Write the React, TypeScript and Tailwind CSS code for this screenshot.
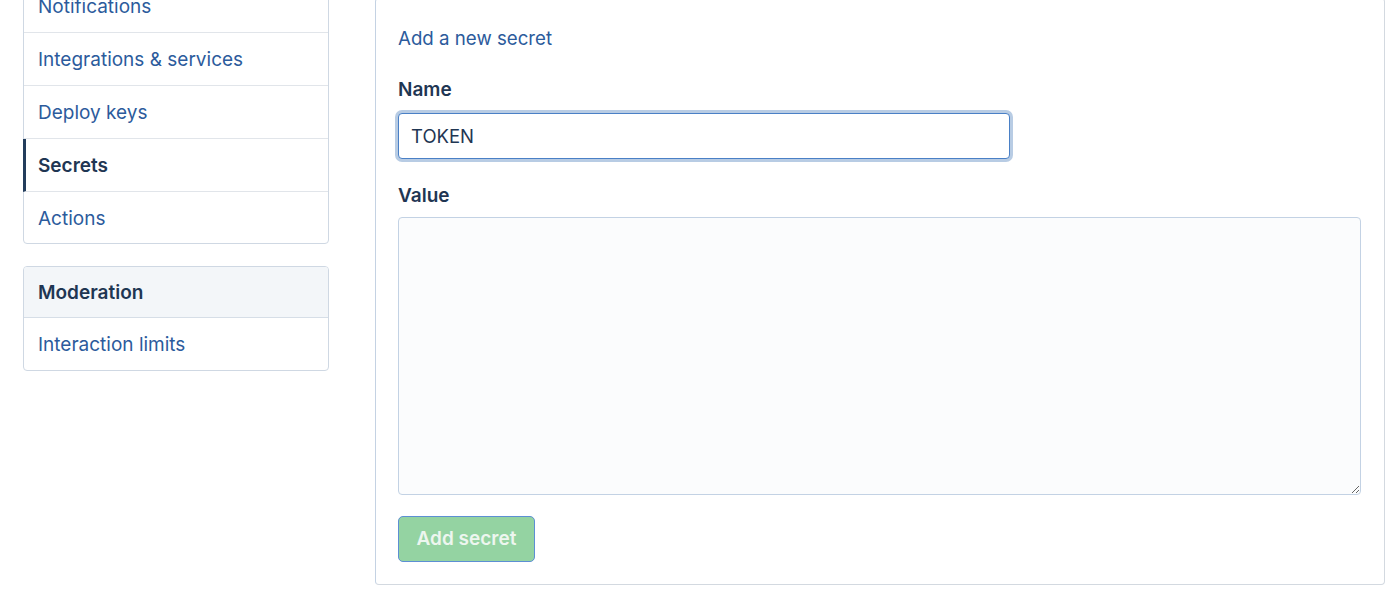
import React from 'react';

const menuItems = ['Notifications', 'Integrations & services', 'Deploy keys', 'Secrets', 'Actions'];

const App: React.FC = () => {
  return (
    <div
      className="min-h-[598px] h-[598px] overflow-hidden bg-white flex items-start pl-[23px]"
      style={{ fontFamily: 'Inter, "Noto Sans", sans-serif' }}
    >
      {/* sidebar */}
      <div className="w-[306px] -mt-[21px] flex flex-col gap-[22px] shrink-0">
        <nav className="border border-[#cfd8e3] rounded-[4px] bg-white">
          {menuItems.map((item, i) => {
            const selected = item === 'Secrets';
            const last = i === menuItems.length - 1;
            return (
              <a
                key={item}
                className={
                  'flex items-center pt-[3px] text-[19px] ' +
                  (last ? 'h-[51px] ' : 'h-[53px] border-b border-[#e1e5ea] ') +
                  (selected
                    ? 'border-l-[3px] border-l-[#233d5c] -ml-px pl-[12px] font-semibold text-[#1f3653]'
                    : 'pl-[14px] text-[#2c5b9c]')
                }
              >
                {item}
              </a>
            );
          })}
        </nav>
        <nav className="border border-[#cfd8e3] rounded-[4px] bg-white overflow-hidden">
          <div className="h-[51px] flex items-center pt-[2px] pl-[14px] bg-[#f3f6f9] border-b border-[#d6dee7] text-[19px] font-semibold text-[#1f3653]">
            Moderation
          </div>
          <a className="h-[52px] flex items-center pt-[2px] pl-[14px] text-[19px] text-[#2c5b9c]">Interaction limits</a>
        </nav>
      </div>

      {/* main */}
      <div className="ml-[46px] w-[1010px] -mt-[2px] border border-[#d3d9e0] border-l-[#c4d2e3] rounded-[4px] bg-white pt-[26px] pb-[22px] pl-[22px] pr-[23px] flex flex-col">
        <div className="text-[18.7px] leading-[28px] text-[#2c5b9c]">Add a new secret</div>
        <label className="mt-[24px] text-[19px] leading-[26px] font-semibold text-[#1f3653]">Name</label>
        <input
          readOnly
          value="TOKEN"
          className="mt-[10px] w-[612px] h-[46px] px-[12px] text-[18.5px] text-[#1f3653] bg-white border border-[#4a80c6] rounded-[4px] outline-none shadow-[0_0_0_3px_#b8cce4]"
        />
        <label className="mt-[24px] text-[19px] leading-[26px] font-semibold text-[#1f3653]">Value</label>
        <textarea
          readOnly
          className="mt-[8px] w-[963px] h-[278px] bg-[#fbfcfd] border border-[#c3d2e4] rounded-[4px] outline-none"
        />
        <div className="mt-[21px]">
          <button className="w-[137px] h-[46px] rounded-[5px] bg-[#94d3a2] border border-[#5d8fd4] text-[19px] font-semibold text-[#edf6ef]">
            Add secret
          </button>
        </div>
      </div>
    </div>
  );
};

export default App;
